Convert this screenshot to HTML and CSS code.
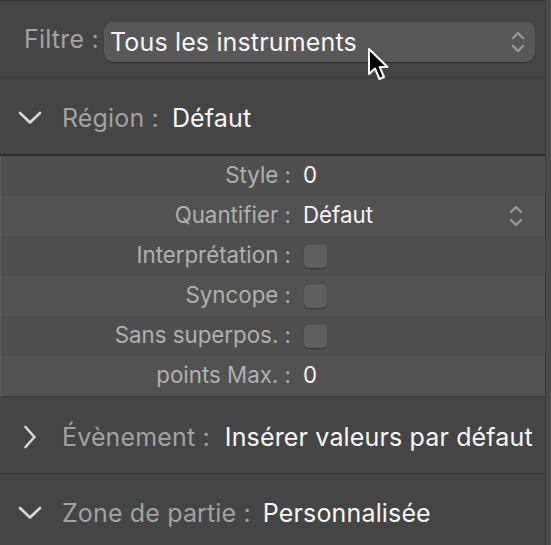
FILE: index.html
```html
<!DOCTYPE html>
<html lang="fr">
<head>
<meta charset="utf-8">
<title>Inspecteur</title>
<link rel="stylesheet" href="styles.css">
</head>
<body>
<div class="panel">
  <div class="filter-bar">
    <span class="filter-label">Filtre :</span>
    <div class="popup">
      <span class="popup-text">Tous les instruments</span>
      <svg class="updown" width="14" height="24" viewBox="0 0 14 24"><path d="M2 8 L7 3 L12 8 M2 16 L7 21 L12 16" fill="none" stroke="#9a9a9a" stroke-width="2.2" stroke-linecap="round" stroke-linejoin="round"/></svg>
    </div>
    <svg class="cursor" width="26" height="36" viewBox="0 0 26 36"><path d="M2 2 L2 27 L8 21.5 L12.5 32 L17 30 L12.6 20 L20.5 20 Z" fill="#000" stroke="#fff" stroke-width="2" stroke-linejoin="round"/></svg>
  </div>

  <div class="section region">
    <svg class="chev down" width="24" height="14" viewBox="0 0 24 14"><path d="M2 2 L12 11.5 L22 2" fill="none" stroke="#d8d8d8" stroke-width="2.6" stroke-linecap="round" stroke-linejoin="round"/></svg>
    <span class="sec-label">Région :</span>
    <span class="sec-value">Défaut</span>
  </div>

  <div class="rows">
    <div class="row"><span class="lbl">Style :</span><span class="val">0</span></div>
    <div class="row"><span class="lbl">Quantifier :</span><span class="val grow">Défaut</span>
      <svg class="updown" width="14" height="24" viewBox="0 0 14 24"><path d="M2 8 L7 3 L12 8 M2 16 L7 21 L12 16" fill="none" stroke="#9a9a9a" stroke-width="2.2" stroke-linecap="round" stroke-linejoin="round"/></svg>
    </div>
    <div class="row"><span class="lbl">Interprétation :</span><span class="box"></span></div>
    <div class="row"><span class="lbl">Syncope :</span><span class="box"></span></div>
    <div class="row"><span class="lbl">Sans superpos. :</span><span class="box"></span></div>
    <div class="row"><span class="lbl">points Max. :</span><span class="val">0</span></div>
  </div>

  <div class="section event">
    <svg class="chev right" width="14" height="24" viewBox="0 0 14 24"><path d="M2.5 2 L11.5 12 L2.5 22" fill="none" stroke="#d8d8d8" stroke-width="2.6" stroke-linecap="round" stroke-linejoin="round"/></svg>
    <span class="sec-label">Évènement :</span>
    <span class="sec-value">Insérer valeurs par défaut</span>
  </div>

  <div class="section zone">
    <svg class="chev down" width="24" height="14" viewBox="0 0 24 14"><path d="M2 2 L12 11.5 L22 2" fill="none" stroke="#d8d8d8" stroke-width="2.6" stroke-linecap="round" stroke-linejoin="round"/></svg>
    <span class="sec-label">Zone de partie :</span>
    <span class="sec-value">Personnalisée</span>
  </div>
</div>
</body>
</html>
```

FILE: styles.css
```css
html, body {
  margin: 0;
  padding: 0;
  background: #4a4a4a;
  height: 545px;
  overflow: hidden;
}

.panel {
  width: 546px;
  height: 545px;
  background: #454545;
  border-right: 1px solid #3a3a3a;
  border-top: 1px solid #383838;
  box-sizing: border-box;
  font-family: "Inter", "Liberation Sans", sans-serif;
  font-weight: 400;
  color: #f2f2f2;
}

.filter-bar {
  position: relative;
  height: 77px;
  display: flex;
  align-items: center;
  padding-left: 24px;
  border-bottom: 1px solid #3b3b3b;
  box-sizing: border-box;
}

.filter-label {
  font-size: 25px;
  color: #a2a2a2;
  width: 80px;
  letter-spacing: 0.2px;
}

.popup {
  width: 431px;
  height: 40px;
  margin-top: 6px;
  border-radius: 9px;
  background: #585858;
  box-shadow: 0 1px 1px rgba(0,0,0,0.35);
  display: flex;
  align-items: center;
  padding: 0 10px 0 6px;
  box-sizing: border-box;
}

.popup-text {
  flex: 1;
  font-size: 25px;
  letter-spacing: 0.15px;
  color: #f6f6f6;
}

.updown {
  display: block;
}

.cursor {
  position: absolute;
  left: 367px;
  top: 46px;
}

.section {
  display: flex;
  align-items: center;
  box-sizing: border-box;
  font-size: 25px;
  letter-spacing: 0.15px;
}

.region {
  height: 78px;
  border-bottom: 2px solid #2f2f2f;
  padding-top: 4px;
}

.event {
  height: 77px;
  border-bottom: 1px solid #393939;
  padding-top: 3px;
}

.zone {
  height: 73px;
  padding-top: 4px;
}

.chev {
  display: block;
  flex: none;
}

.chev.down {
  margin-left: 18px;
  margin-right: 20px;
}

.chev.right {
  margin-left: 23px;
  margin-right: 25px;
}

.sec-label {
  color: #a2a2a2;
  margin-right: 13px;
}

.event .sec-label { margin-right: 15px; }
.zone .sec-label { margin-right: 12px; }

.sec-value {
  color: #f8f8f8;
}

.rows {
  border-bottom: 1px solid #3a3a3a;
  border-left: 1px solid #5e5e5e;
}

.row {
  height: 40px;
  display: grid;
  grid-template-columns: 290px auto 1fr;
  align-items: center;
  column-gap: 12px;
  font-size: 22.3px;
  background: #4f4f4f;
}

.row:nth-child(even) {
  background: #525252;
}

.row:has(.updown) {
  grid-template-columns: 290px 1fr auto;
  padding-right: 22px;
}

.lbl,
.val {
  padding-bottom: 3px;
}

.lbl {
  text-align: right;
  color: #b0b0b0;
}

.val {
  color: #f6f6f6;
}

.box {
  width: 23px;
  height: 23px;
  border-radius: 5px;
  background: #5f5f5f;
  box-shadow: 0 1px 1px rgba(0,0,0,0.35), inset 0 1px 0 rgba(255,255,255,0.05);
  margin-left: 1px;
}
```
